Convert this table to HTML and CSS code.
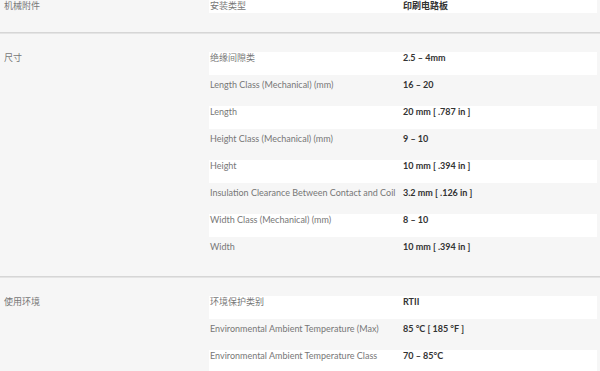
FILE: index.html
```html
<!DOCTYPE html>
<html lang="zh">
<head>
<meta charset="utf-8">
<title>Specs</title>
<link rel="stylesheet" href="styles.css">
</head>
<body>
<div class="specs">
  <section class="group group-first">
    <div class="group-title">机械附件</div>
    <div class="rows">
      <div class="row alt"><span class="name">安装类型</span><span class="val">印刷电路板</span></div>
    </div>
  </section>
  <section class="group">
    <div class="group-title">尺寸</div>
    <div class="rows">
      <div class="row alt"><span class="name">绝缘间隙类</span><span class="val">2.5 – 4mm</span></div>
      <div class="row"><span class="name">Length Class (Mechanical) (mm)</span><span class="val">16 – 20</span></div>
      <div class="row alt"><span class="name">Length</span><span class="val">20 mm [ .787 in ]</span></div>
      <div class="row"><span class="name">Height Class (Mechanical) (mm)</span><span class="val">9 – 10</span></div>
      <div class="row alt"><span class="name">Height</span><span class="val">10 mm [ .394 in ]</span></div>
      <div class="row"><span class="name">Insulation Clearance Between Contact and Coil</span><span class="val">3.2 mm [ .126 in ]</span></div>
      <div class="row alt"><span class="name">Width Class (Mechanical) (mm)</span><span class="val">8 – 10</span></div>
      <div class="row"><span class="name">Width</span><span class="val">10 mm [ .394 in ]</span></div>
    </div>
  </section>
  <section class="group">
    <div class="group-title">使用环境</div>
    <div class="rows">
      <div class="row alt"><span class="name">环境保护类别</span><span class="val">RTII</span></div>
      <div class="row"><span class="name">Environmental Ambient Temperature (Max)</span><span class="val">85 °C [ 185 °F ]</span></div>
      <div class="row alt"><span class="name">Environmental Ambient Temperature Class</span><span class="val">70 – 85°C</span></div>
    </div>
  </section>
</div>
</body>
</html>
```
FILE: styles.css
```css
html, body {
  margin: 0;
  padding: 0;
  background: #f6f6f6;
}
body {
  font-family: Lato, "Noto Sans CJK SC", sans-serif;
  font-size: 9px;
  line-height: 12px;
  color: #777;
  overflow: hidden;
}
.specs {
  width: 600px;
}
.group {
  display: grid;
  grid-template-columns: 209px 388px;
  border-top: 1px solid #d6d6d6;
  box-shadow: inset 0 1px 0 #e4e4e4;
  padding: 15px 0 12px 0;
}
.group-first {
  border-top: none;
  box-shadow: none;
  padding: 0 0 19px 0;
}
.group-title {
  padding: 4px 0 0 4px;
}
.group-first .group-title {
  padding-top: 0;
}
.rows {
  display: flex;
  flex-direction: column;
}
.row {
  display: grid;
  grid-template-columns: 194px 1fr;
  min-height: 23px;
  margin-top: 4px;
}
.group-first .row {
  margin-top: 0;
  min-height: 13px;
}
.row.alt {
  background: #fff;
}
.name {
  padding-left: 1px;
  white-space: nowrap;
}
.val {
  font-weight: 700;
  color: #333;
  white-space: nowrap;
}
```
